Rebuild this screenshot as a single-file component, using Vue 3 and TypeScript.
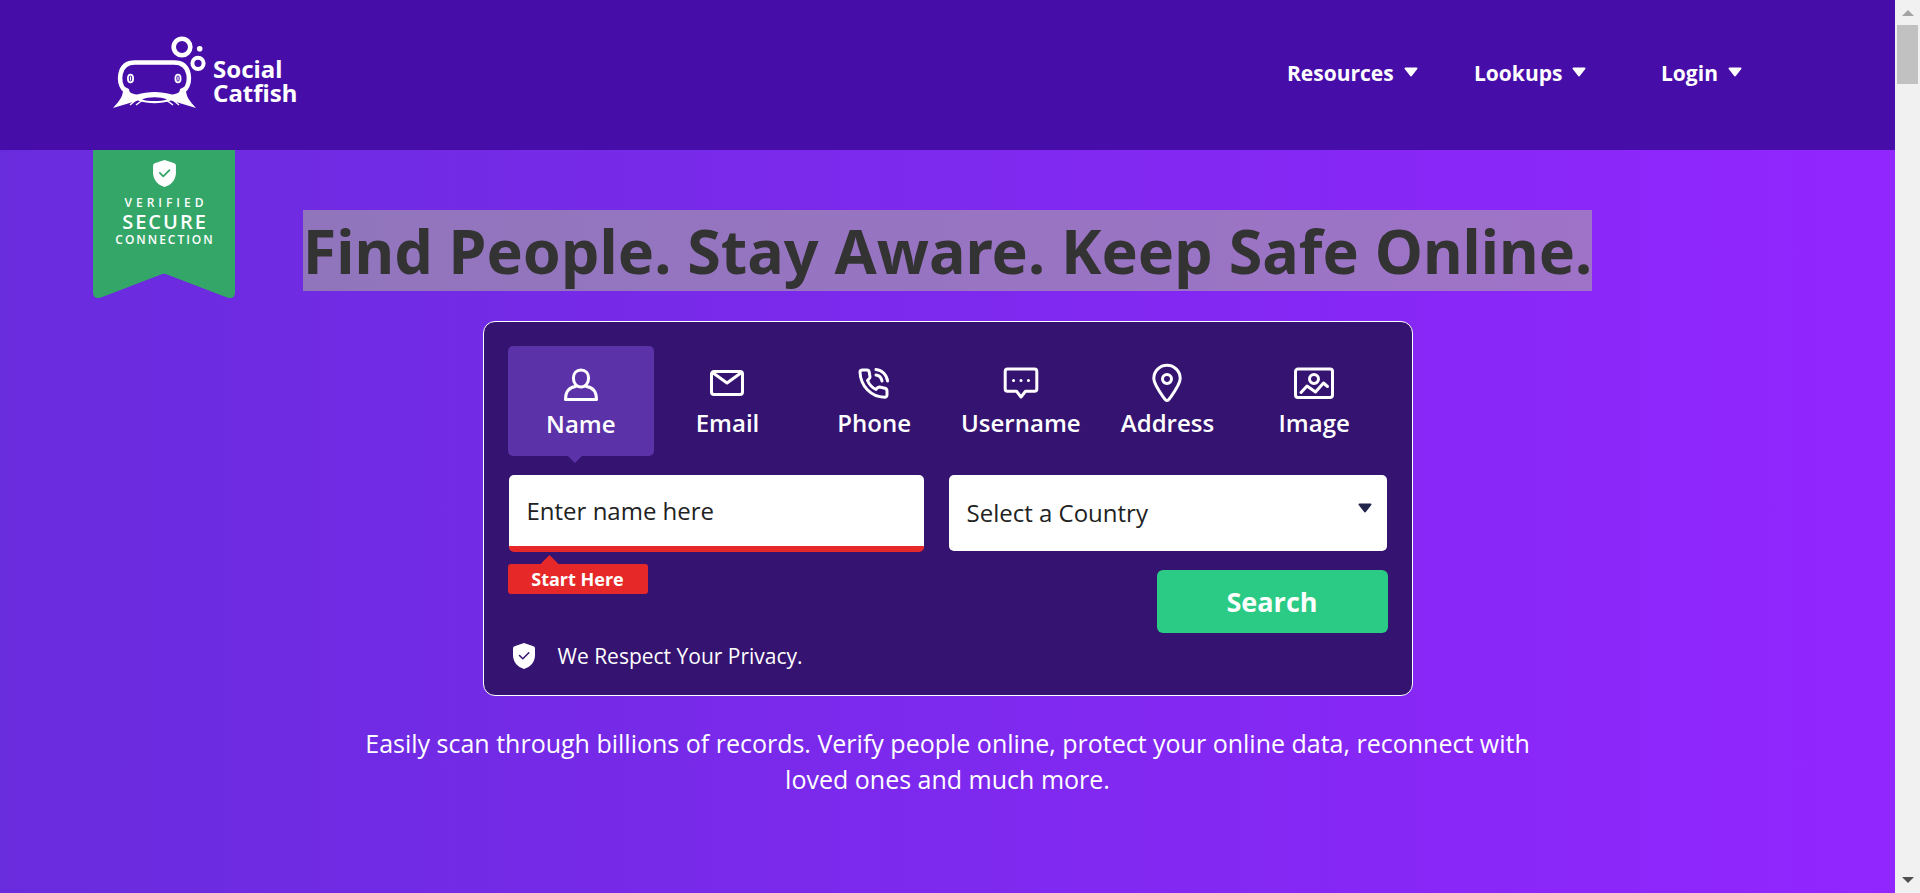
<script setup lang="ts">
import { ref } from 'vue'

interface Tab {
  id: string
  label: string
  paths: string[]
}

const menus: string[] = ['Resources', 'Lookups', 'Login']

const tabs: Tab[] = [
  {
    id: 'name',
    label: 'Name',
    paths: [
      'M20 6C24.6 6 27.6 9.4 27.6 14C27.6 19 24.6 23 20 23C15.4 23 12.4 19 12.4 14C12.4 9.4 15.4 6 20 6Z',
      'M14.5 22.5C8 23.5 4.5 28 4.5 35.5H35.5C35.5 28 32 23.5 25.5 22.5',
    ],
  },
  {
    id: 'email',
    label: 'Email',
    paths: ['M7 8.5H33A2.5 2.5 0 0 1 35.5 11V29A2.5 2.5 0 0 1 33 31.5H7A2.5 2.5 0 0 1 4.5 29V11A2.5 2.5 0 0 1 7 8.5Z', 'M5.5 9.5L20 20L34.5 9.5'],
  },
  {
    id: 'phone',
    label: 'Phone',
    paths: [
      'M6 9C6 7.500 7 7 8.5 7H13C14.5 7 15 8 15.2 9L16 14C16 15.5 14.5 16 13.5 17.5C15 21 18 24.5 22 26.5C23 25 24 23.8 25.5 24L31 25.2C32.5 25.6 33 26.5 33 28V32C33 33.5 32 34.3 30.5 34.2C17 34 6.5 23 6 9Z',
      'M22 6.5C28 7 33 12 33.5 18',
      'M22 12C25 12.5 27.5 15 28 18',
    ],
  },
  {
    id: 'username',
    label: 'Username',
    paths: [
      'M6.5 6H33.5A2.3 2.3 0 0 1 35.8 8.3V26A2.3 2.3 0 0 1 33.5 28.3H24.5L20 34L15.5 28.3H6.5A2.3 2.3 0 0 1 4.2 26V8.3A2.3 2.3 0 0 1 6.5 6Z',
      'M12.5 17.5H12.6M19.95 17.5H20.05M27.4 17.5H27.5',
    ],
  },
  {
    id: 'address',
    label: 'Address',
    paths: [
      'M20 37.5C18.5 37.5 17.8 36 17 35C12 28 6.8 21 6.8 15.5A13.2 13.2 0 0 1 33.2 15.5C33.2 21 28 28 23 35C22.2 36 21.5 37.5 20 37.5Z',
      'M20 11.5A4.5 4.5 0 1 1 20 20.5A4.5 4.5 0 1 1 20 11.5Z',
    ],
  },
  {
    id: 'image',
    label: 'Image',
    paths: [
      'M4 6H36A2.5 2.5 0 0 1 38.5 8.5V32A2.5 2.5 0 0 1 36 34.5H4A2.5 2.5 0 0 1 1.5 32V8.5A2.5 2.5 0 0 1 4 6Z',
      'M20 11.5A4.5 4.5 0 1 1 20 20.5A4.5 4.5 0 1 1 20 11.5Z',
      'M7 29.5L13 23L21.5 29L29.5 20L33.5 23.5',
    ],
  },
]

const active = ref<string>('name')
const query = ref<string>('')
const country = ref<string>('')
</script>

<template>
  <div class="window">
    <div class="page">
      <header class="header">
        <a class="logo" href="#" aria-label="Social Catfish">
          <svg class="fish" viewBox="23 16 94 74" fill="none" stroke="#fff" aria-hidden="true">
            <path d="M34 70C29.5 64 29.5 59 30.5 54C32 46.5 37 42.5 45 42.5H84C92 42.5 97 46.5 98.5 54C99.5 59 99.5 64 95 70" stroke-width="4.5" />
            <path d="M23 88C29 81 34 77 33 66L39 69C39 72 41 74 47 74.5C58 71 71 71 82 74.5C88 74 90 72 90 69L96 66C95 77 100 81 106 88L81 80.5C71 84 58 84 48 80.5Z" fill="#fff" stroke="none" />
            <path d="M52 79.5C58 76.5 71 76.5 77 79.5C71 81.5 58 81.5 52 79.5Z" fill="#460da8" stroke="none" />
            <path d="M47 79L40 85M52 80.5L46 85M82 79L89 85M77 80.5L83 85" stroke-width="1.5" />
            <ellipse cx="40.5" cy="58.5" rx="2.6" ry="3.8" stroke-width="1.8" />
            <ellipse cx="88" cy="58.5" rx="2.6" ry="3.8" stroke-width="1.8" />
            <path d="M40.5 56.5V60.5M88 56.5V60.5" stroke-width="1.2" />
            <circle cx="92" cy="27" r="8.3" stroke-width="4.6" />
            <circle cx="108" cy="43.3" r="5.6" stroke-width="4" />
            <circle cx="109.7" cy="28.7" r="2.8" fill="#fff" stroke="none" />
          </svg>
          <span class="wordmark">Social<br />Catfish</span>
        </a>
        <nav class="nav">
          <button v-for="menu in menus" :key="menu" type="button" class="menu">
            {{ menu }}
            <svg class="caret" viewBox="0 0 14 10" aria-hidden="true">
              <path d="M1.5 1.5H12.5L7 8.5Z" />
            </svg>
          </button>
        </nav>
      </header>

      <main class="hero">
        <div class="ribbon">
          <svg class="ribbon-shape" viewBox="0 0 142 148" aria-hidden="true">
            <path d="M0 0H142V142Q142 150 134 147.5L74 124.5Q71 123 68 124.5L8 147.5Q0 150 0 142Z" fill="#34a668" />
          </svg>
          <svg class="ribbon-shield" viewBox="0 0 22 26" aria-hidden="true">
            <path d="M11 0L20.5 3.2Q22 3.8 22 5.5V12C22 19 17.5 24 11 26C4.5 24 0 19 0 12V5.5Q0 3.8 1.5 3.2Z" fill="#fff" />
            <path d="M6.5 12.5L9.8 15.8L15.8 9.8" fill="none" stroke="#34a668" stroke-width="1.7" stroke-linecap="round" stroke-linejoin="round" />
          </svg>
          <span class="verified">VERIFIED</span>
          <span class="secure">SECURE</span>
          <span class="connection">CONNECTION</span>
        </div>

        <h1 class="title"><span class="selected">Find People. Stay Aware. Keep Safe Online.</span></h1>

        <form class="card" @submit.prevent>
          <div class="tabs" role="tablist">
            <button
              v-for="tab in tabs"
              :key="tab.id"
              type="button"
              role="tab"
              class="tab"
              :class="{ active: tab.id === active }"
              :aria-selected="tab.id === active"
              @click="active = tab.id"
            >
              <svg class="tab-icon" viewBox="0 0 40 40" aria-hidden="true">
                <path v-for="d in tab.paths" :key="d" :d="d" />
              </svg>
              <span>{{ tab.label }}</span>
            </button>
          </div>

          <div class="fields">
            <input v-model="query" class="name-input" type="text" placeholder="Enter name here" aria-label="Enter name here" />
            <div class="country">
              <select v-model="country" class="country-select" aria-label="Select a Country">
                <option value="">Select a Country</option>
              </select>
              <svg class="caret country-caret" viewBox="0 0 14 10" aria-hidden="true">
                <path d="M1.5 1.5H12.5L7 8.5Z" />
              </svg>
            </div>
          </div>

          <div class="actions">
            <div class="hint">Start Here</div>
            <button type="submit" class="search">Search</button>
          </div>

          <div class="privacy">
            <svg class="shield" viewBox="0 0 22 26" aria-hidden="true">
              <path d="M11 0L20.5 3.2Q22 3.8 22 5.5V12C22 19 17.5 24 11 26C4.5 24 0 19 0 12V5.5Q0 3.8 1.5 3.2Z" fill="#fff" />
              <path d="M6.5 12.5L9.8 15.8L15.8 9.8" fill="none" stroke="#351371" stroke-width="1.5" stroke-linecap="round" stroke-linejoin="round" />
            </svg>
            <span>We Respect Your Privacy.</span>
          </div>
        </form>

        <p class="lead">
          Easily scan through billions of records. Verify people online, protect your online data, reconnect with loved ones and much more.
        </p>
      </main>
    </div>

    <div class="scrollbar" aria-hidden="true">
      <svg class="scroll-arrow" viewBox="0 0 12 6"><path d="M6 0L12 6H0Z" fill="#a3a3a3" /></svg>
      <div class="thumb"></div>
      <svg class="scroll-arrow down" viewBox="0 0 12 6"><path d="M0 0H12L6 6Z" fill="#505050" /></svg>
    </div>
  </div>
</template>

<style>
body {
  margin: 0;
}
</style>

<style scoped>
.window {
  display: flex;
  min-height: 100vh;
  font-family: 'Open Sans', 'Noto Sans', sans-serif;
  color: #fff;
}

.window *,
.window *::before,
.window *::after {
  box-sizing: border-box;
}

button,
input,
select {
  font: inherit;
  color: inherit;
  margin: 0;
  padding: 0;
  border: 0;
  background: none;
}

button {
  cursor: pointer;
}

.page {
  flex: 1;
  min-width: 0;
  display: flex;
  flex-direction: column;
}

.header {
  display: flex;
  align-items: center;
  justify-content: space-between;
  height: 150px;
  padding: 0 47px 4px 113px;
  background: #460da8;
}

.logo {
  display: flex;
  align-items: flex-end;
  gap: 6px;
  color: #fff;
  text-decoration: none;
}

.fish {
  width: 94px;
  height: 74px;
}

.wordmark {
  padding-bottom: 5px;
  font-family: 'Noto Sans', sans-serif;
  font-size: 24px;
  font-weight: 700;
  line-height: 24px;
}

.nav {
  display: grid;
  grid-template-columns: repeat(3, 187px);
}

.menu {
  display: flex;
  align-items: center;
  gap: 10px;
  font-size: 21px;
  font-weight: 700;
  line-height: 30px;
}

.caret {
  width: 14px;
  height: 10px;
  fill: currentColor;
  stroke: currentColor;
  stroke-width: 2;
  stroke-linejoin: round;
}

.menu .caret {
  margin-bottom: 3px;
}

.hero {
  position: relative;
  flex: 1;
  display: flex;
  flex-direction: column;
  align-items: center;
  padding: 60px 24px;
  background: linear-gradient(90deg, #692cdd, #9226ff);
}

.ribbon {
  position: absolute;
  top: 0;
  left: 93px;
  width: 142px;
  height: 148px;
  padding-top: 10px;
  display: flex;
  flex-direction: column;
  align-items: center;
  font-weight: 600;
}

.ribbon-shape {
  position: absolute;
  inset: 0;
  width: 100%;
  height: 100%;
}

.ribbon-shield {
  position: relative;
  width: 23px;
  height: 27px;
  margin-bottom: 8px;
}

.verified,
.secure,
.connection {
  position: relative;
}

.verified {
  padding-left: 4px;
  font-size: 12px;
  line-height: 16px;
  letter-spacing: 4px;
}

.secure {
  padding-left: 2px;
  font-size: 20px;
  line-height: 21px;
  letter-spacing: 2px;
}

.connection {
  padding-left: 2px;
  font-size: 12px;
  line-height: 16px;
  letter-spacing: 2px;
}

.title {
  margin: 0;
  font-family: 'Noto Sans', sans-serif;
  font-size: 61px;
  font-weight: 700;
  line-height: 81px;
  color: #333;
}

.selected {
  display: block;
  background: rgba(178, 191, 149, 0.5);
}

.card {
  width: 100%;
  max-width: 930px;
  margin-top: 30px;
  padding: 24px;
  border: 1px solid #fff;
  border-radius: 12px;
  background: #351371;
}

.tabs {
  display: grid;
  grid-template-columns: repeat(6, 1fr);
}

.tab {
  position: relative;
  display: flex;
  flex-direction: column;
  align-items: center;
  gap: 5px;
  padding: 17px 0 18px;
  border-radius: 5px;
  font-size: 24px;
  font-weight: 600;
  line-height: 30px;
}

.tab.active {
  padding: 18px 0 17px;
  background: #5b32a8;
}

.tab.active::after {
  content: '';
  position: absolute;
  top: 100%;
  left: 46%;
  width: 14px;
  height: 7px;
  margin-left: -7px;
  background: #5b32a8;
  clip-path: polygon(0 0, 100% 0, 50% 100%);
}

.tab-icon {
  width: 40px;
  height: 40px;
  fill: none;
  stroke: #fff;
  stroke-width: 3;
  stroke-linecap: round;
  stroke-linejoin: round;
}

.fields {
  display: grid;
  grid-template-columns: 415fr 438fr;
  gap: 25px;
  margin: 19px 1px 0;
  color: #222;
  font-size: 24px;
}

.name-input {
  width: 100%;
  height: 77px;
  padding: 0 18px;
  border-bottom: 6px solid #e62828;
  border-radius: 5px;
  background: #fff;
  outline: none;
}

.name-input::placeholder {
  color: #222;
  opacity: 1;
}

.country {
  position: relative;
}

.country-select {
  width: 100%;
  height: 76px;
  padding: 0 40px 2px 18px;
  border-radius: 5px;
  background: #fff;
  appearance: none;
}

.country-caret {
  position: absolute;
  top: 28px;
  right: 15px;
  color: #22264a;
}

.actions {
  display: flex;
  align-items: flex-start;
  justify-content: space-between;
  margin-top: 12px;
}

.hint {
  position: relative;
  width: 140px;
  border-radius: 3px;
  background: #e62828;
  font-size: 18px;
  font-weight: 700;
  line-height: 30px;
  text-align: center;
}

.hint::before {
  content: '';
  position: absolute;
  bottom: 100%;
  left: 33px;
  width: 18px;
  height: 9px;
  background: #e62828;
  clip-path: polygon(50% 0, 100% 100%, 0 100%);
}

.search {
  width: 231px;
  height: 63px;
  margin-top: 6px;
  border-radius: 6px;
  background: #2bcb85;
  font-size: 27px;
  font-weight: 700;
}

.privacy {
  display: flex;
  align-items: center;
  gap: 23px;
  margin: 8px 0 0 5px;
  font-size: 21px;
  line-height: 30px;
}

.shield {
  width: 22px;
  height: 26px;
}

.lead {
  max-width: 1200px;
  margin: 29px 0 0;
  font-size: 25px;
  line-height: 36px;
  text-align: center;
}

.scrollbar {
  display: flex;
  flex-direction: column;
  align-items: center;
  width: 25px;
  padding: 10px 2px;
  background: #f1f1f1;
}

.scroll-arrow {
  width: 12px;
  height: 6px;
}

.scroll-arrow.down {
  margin-top: auto;
}

.thumb {
  align-self: stretch;
  height: 59px;
  margin-top: 9px;
  background: #c1c1c1;
}
</style>
